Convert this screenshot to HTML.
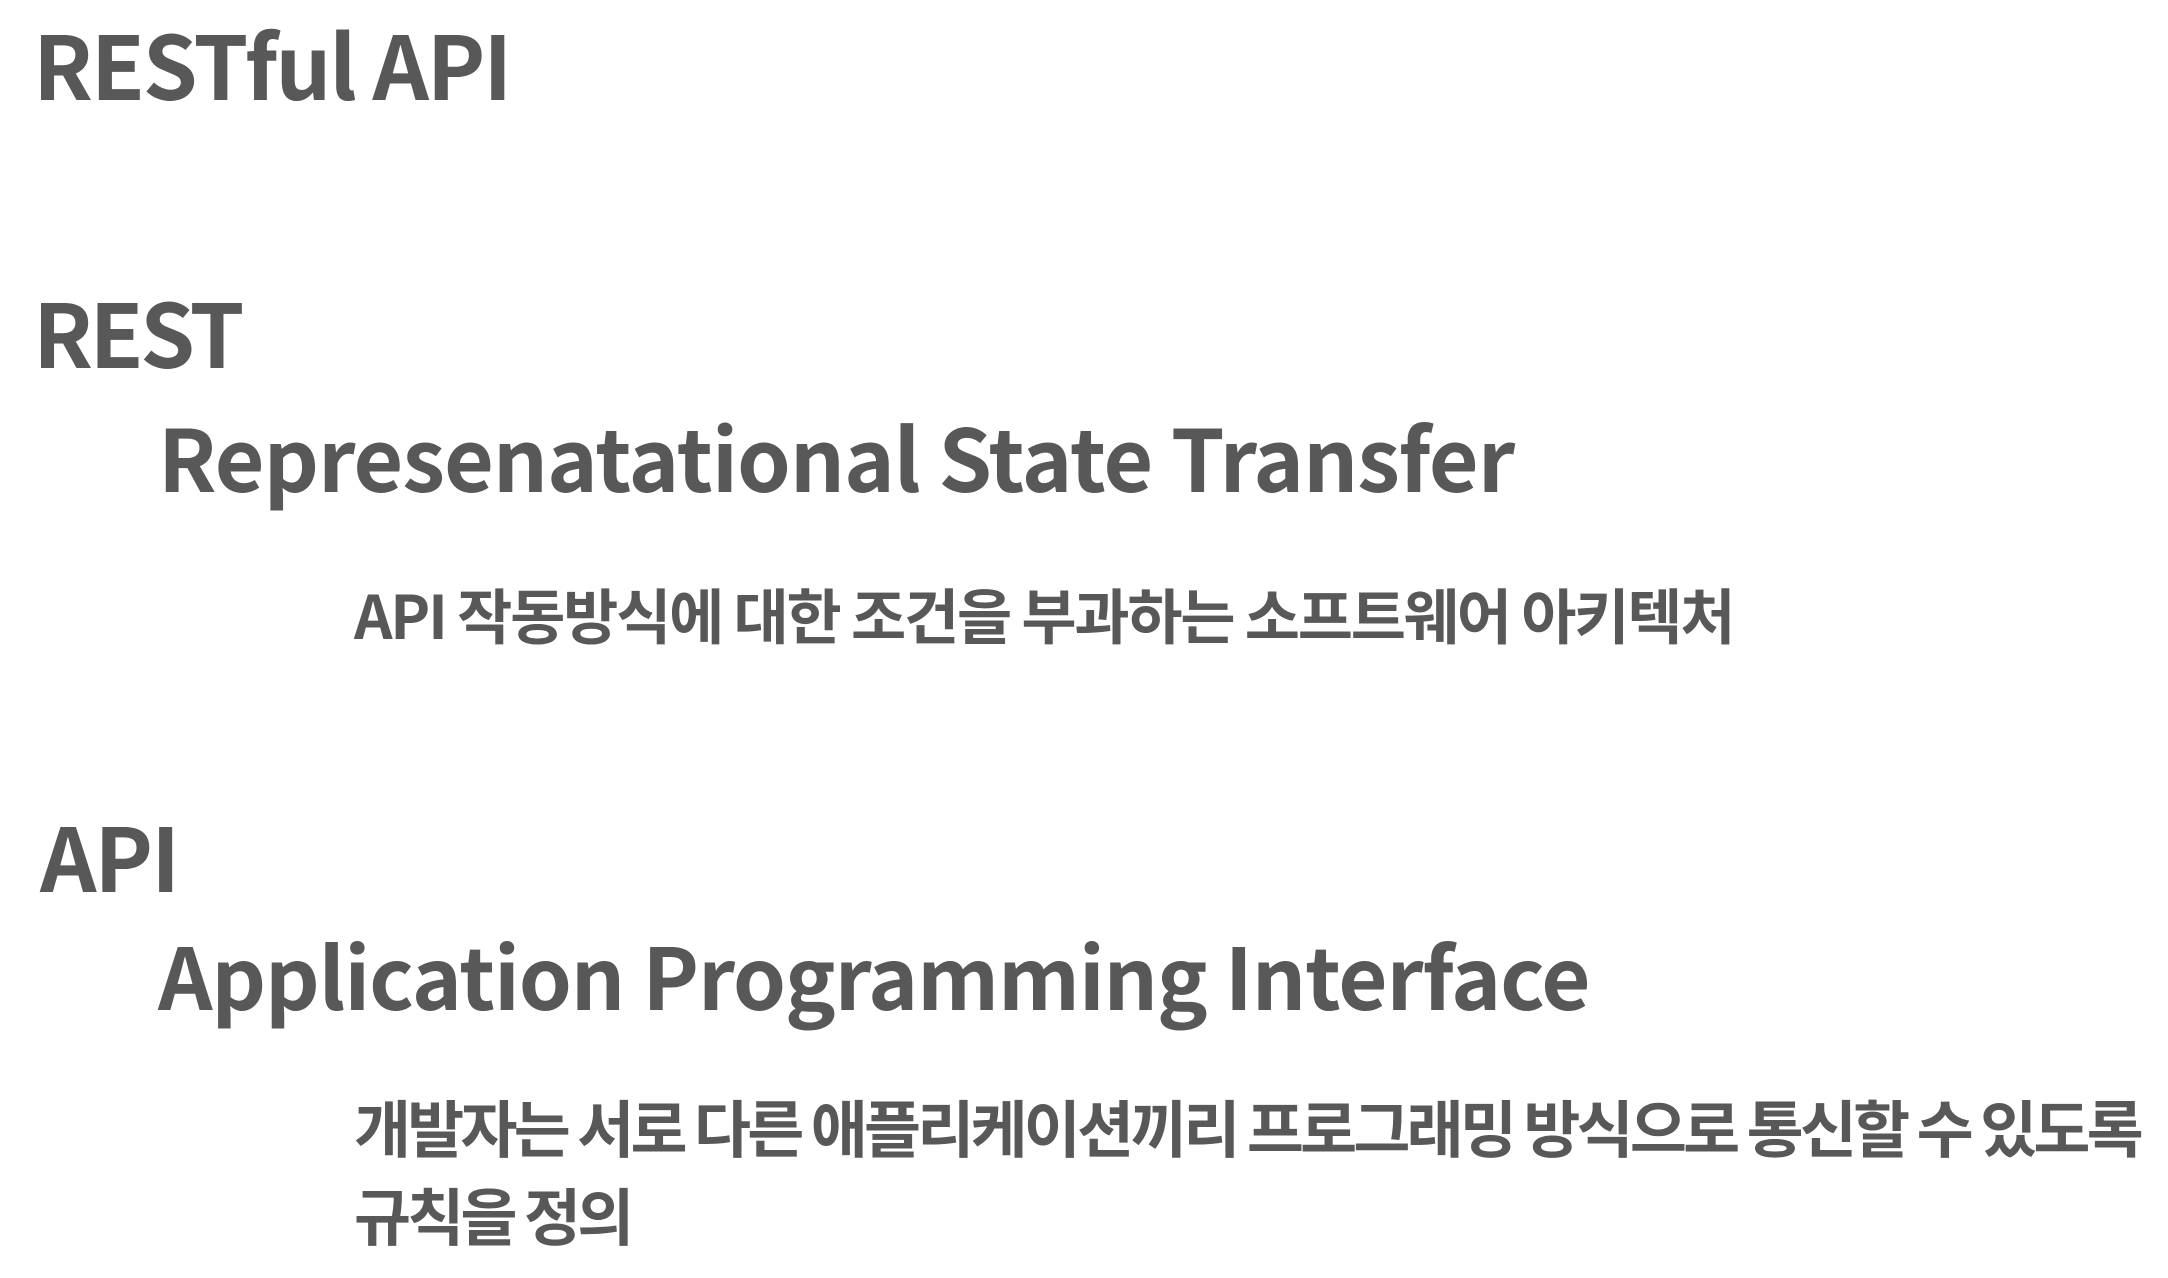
<!DOCTYPE html>
<html><head><meta charset="utf-8"><style>
html,body{margin:0;padding:0;background:#fff;width:2168px;height:1278px;overflow:hidden}
div{position:absolute;white-space:nowrap;font-family:"Noto Sans CJK KR","Liberation Sans",sans-serif;font-weight:bold;color:#585858;line-height:1}
</style></head><body>
<div style="left:33px;top:19px;font-size:88px;letter-spacing:-2.2px">RESTful API</div>
<div style="left:33px;top:287px;font-size:88px;letter-spacing:-3.5px">REST</div>
<div style="left:158px;top:412px;font-size:86px;letter-spacing:-1px">Represenatational State Transfer</div>
<div style="left:354px;top:584px;font-size:60px;letter-spacing:-2.2px">API 작동방식에 대한 조건을 부과하는 소프트웨어 아키텍처</div>
<div style="left:40px;top:811px;font-size:88px;letter-spacing:-2px">API</div>
<div style="left:158px;top:931px;font-size:85px;letter-spacing:-1.1px">Application Programming Interface</div>
<div style="left:354px;top:1094px;font-size:62px;letter-spacing:-3.8px">개발자는 서로 다른 애플리케이션끼리 프로그래밍 방식으로 통신할 수 있도록</div>
<div style="left:354px;top:1182px;font-size:62px;letter-spacing:-3.8px">규칙을 정의</div>
</body></html>
